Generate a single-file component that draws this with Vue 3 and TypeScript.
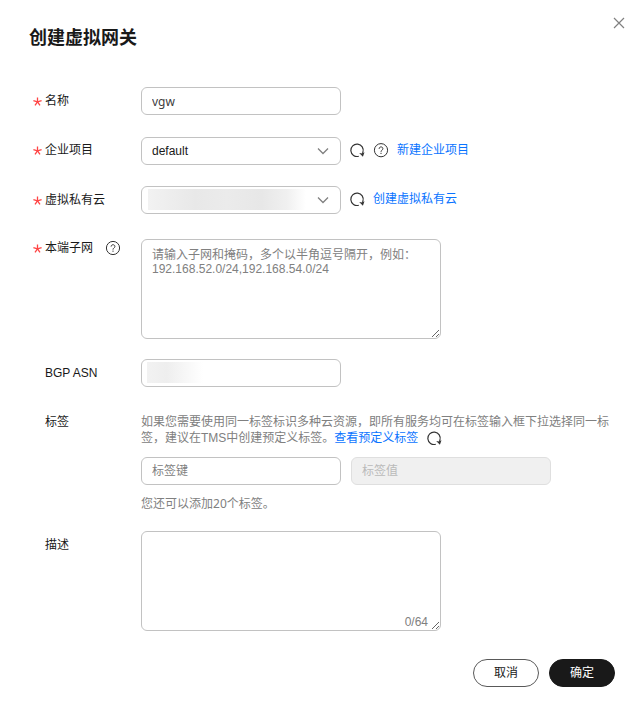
<script setup lang="ts">
import { ref } from 'vue'

const name = ref('vgw')
const project = ref('default')
const vpc = ref('')
const subnets = ref('')
const asn = ref('')
const tagKey = ref('')
const tagValue = ref('')
const description = ref('')
const maxLength = 64
</script>

<template>
  <form class="dialog" @submit.prevent>
    <button class="close" type="button" aria-label="关闭">
      <svg width="12" height="12" viewBox="0 0 12 12"><path d="M1 1l10 10M11 1L1 11" /></svg>
    </button>
    <h1>创建虚拟网关</h1>

    <div class="row name">
      <label class="label required" for="name"><svg class="star" viewBox="0 0 9 9"><path d="M4.5 4.8V.5M4.5 4.8L.4 3.6M4.5 4.8l4.1-1.2M4.5 4.8L2 8.4M4.5 4.8L7 8.4" /></svg>名称</label>
      <input id="name" v-model="name" class="field latin" type="text" />
    </div>

    <div class="row project">
      <label class="label required" for="project"><svg class="star" viewBox="0 0 9 9"><path d="M4.5 4.8V.5M4.5 4.8L.4 3.6M4.5 4.8l4.1-1.2M4.5 4.8L2 8.4M4.5 4.8L7 8.4" /></svg>企业项目</label>
      <div class="line">
        <div class="select">
          <select id="project" v-model="project" class="field"><option>default</option></select>
          <svg class="chevron" viewBox="0 0 12 8"><path d="M1 1.5l5 5 5-5" /></svg>
        </div>
        <button class="icon" type="button" aria-label="刷新">
          <svg viewBox="-1 0 16 16"><path d="M8.8 13.2A6.2 6.2 0 1 1 12.9 9.2l-.4 1.6" /><path class="solid" d="M9.2 9.9l3.7 3.8 1.6-4.5-2.2 1.4z" /></svg>
        </button>
        <button class="icon help" type="button" aria-label="帮助">
          <svg viewBox="0 0 16 16"><circle cx="8" cy="7.2" r="6.6" /><path d="M6.1 5.8C6.1 3.3 9.9 3.3 9.9 5.7 9.9 7.2 8 7.1 8 8.8M8 9.8V11" /></svg>
        </button>
        <a href="#">新建企业项目</a>
      </div>
    </div>

    <div class="row vpc">
      <label class="label required" for="vpc"><svg class="star" viewBox="0 0 9 9"><path d="M4.5 4.8V.5M4.5 4.8L.4 3.6M4.5 4.8l4.1-1.2M4.5 4.8L2 8.4M4.5 4.8L7 8.4" /></svg>虚拟私有云</label>
      <div class="line">
        <div class="select">
          <select id="vpc" v-model="vpc" class="field masked"><option value=""></option></select>
          <svg class="chevron" viewBox="0 0 12 8"><path d="M1 1.5l5 5 5-5" /></svg>
        </div>
        <button class="icon" type="button" aria-label="刷新">
          <svg viewBox="-1 0 16 16"><path d="M8.8 13.2A6.2 6.2 0 1 1 12.9 9.2l-.4 1.6" /><path class="solid" d="M9.2 9.9l3.7 3.8 1.6-4.5-2.2 1.4z" /></svg>
        </button>
        <a href="#">创建虚拟私有云</a>
      </div>
    </div>

    <div class="row subnet">
      <div class="label short required">
        <svg class="star" viewBox="0 0 9 9"><path d="M4.5 4.8V.5M4.5 4.8L.4 3.6M4.5 4.8l4.1-1.2M4.5 4.8L2 8.4M4.5 4.8L7 8.4" /></svg>
        <label for="subnets">本端子网</label>
        <button class="icon help after" type="button" aria-label="帮助">
          <svg viewBox="0 0 16 16"><circle cx="8" cy="8" r="6.6" /><path d="M6.1 6.6C6.1 4.1 9.9 4.1 9.9 6.5 9.9 8 8 7.9 8 9.6M8 10.6v1.2" /></svg>
        </button>
      </div>
      <textarea id="subnets" v-model="subnets" placeholder="请输入子网和掩码，多个以半角逗号隔开，例如：192.168.52.0/24,192.168.54.0/24"></textarea>
    </div>

    <div class="row asn">
      <label class="label" for="asn">BGP ASN</label>
      <input id="asn" v-model="asn" class="field masked-short" type="text" />
    </div>

    <div class="row tags">
      <label class="label short" for="tag-key">标签</label>
      <div>
        <p class="intro">如果您需要使用同一标签标识多种云资源，即所有服务均可在标签输入框下拉选择同一标签，建议在TMS中创建预定义标签。<a href="#">查看预定义标签</a><button class="icon inline" type="button" aria-label="刷新"><svg viewBox="-1 -1 16 16"><path d="M8.8 13.2A6.2 6.2 0 1 1 12.9 9.2l-.4 1.6" /><path class="solid" d="M9.2 9.9l3.7 3.8 1.6-4.5-2.2 1.4z" /></svg></button></p>
        <div class="pair">
          <input id="tag-key" v-model="tagKey" class="field" type="text" placeholder="标签键" />
          <input v-model="tagValue" class="field" type="text" placeholder="标签值" aria-label="标签值" disabled />
        </div>
        <p class="hint">您还可以添加<span class="latin">20</span>个标签。</p>
      </div>
    </div>

    <div class="row">
      <label class="label" for="description">描述</label>
      <div class="counted">
        <textarea id="description" v-model="description" :maxlength="maxLength"></textarea>
        <span class="count">{{ description.length }}/{{ maxLength }}</span>
      </div>
    </div>

    <footer>
      <button class="btn" type="button">取消</button>
      <button class="btn primary" type="submit">确定</button>
    </footer>
  </form>
</template>

<style>
body {
  background: #fff;
}
</style>

<style scoped>
.dialog,
.dialog * {
  box-sizing: border-box;
}
.dialog {
  position: relative;
  padding: 24px 26px 29px 29px;
  font: 12px/16px "Liberation Sans", "Noto Sans CJK SC", sans-serif;
  color: #191919;
}
button,
input,
select,
textarea {
  font: inherit;
  color: inherit;
}
h1 {
  margin: 0 0 35px;
  font-size: 18px;
  line-height: 28px;
  font-weight: 700;
}
p {
  margin: 0;
}
a {
  color: #0a74ff;
  text-decoration: none;
}
svg {
  display: block;
  fill: none;
  stroke: currentColor;
}
.close {
  position: absolute;
  top: 17px;
  right: 16px;
  padding: 0;
  border: 0;
  background: none;
  color: #808080;
}
.close svg {
  stroke-width: 1.2;
}
.row {
  display: grid;
  grid-template-columns: 96px minmax(0, 1fr);
  align-items: start;
  padding-left: 16px;
}
.name {
  margin-bottom: 22px;
}
.project {
  margin-bottom: 21px;
}
.vpc {
  margin-bottom: 25px;
}
.subnet {
  margin-bottom: 20px;
}
.asn {
  margin-bottom: 26px;
}
.tags {
  margin-bottom: 19px;
}
.label {
  display: flex;
  align-items: center;
  line-height: 28px;
}
.project .label,
.line a {
  line-height: 26px;
}
.line a {
  align-self: flex-start;
}
.label.short {
  line-height: 18px;
}
.required {
  margin-left: -12px;
}
.star {
  width: 9px;
  height: 9px;
  margin-right: 3px;
  color: #ff4545;
  stroke-width: 1.3;
}
.line {
  display: flex;
  align-items: center;
}
.field {
  width: 200px;
  max-width: 100%;
  height: 28px;
  padding: 0 10px;
  border: 1px solid #c2c2c2;
  border-radius: 6px;
  background: #fff;
  outline: 0;
}
.field:disabled {
  border-color: #dfdfdf;
  background: #f0f0f0;
}
::placeholder {
  color: #808080;
  opacity: 1;
}
.field:disabled::placeholder {
  color: #bababa;
}
.latin {
  font-family: "Noto Sans", "Noto Sans CJK SC", sans-serif;
}
.name .field {
  color: #404040;
}
.select {
  position: relative;
  margin-right: 8px;
}
.select .field {
  display: block;
  appearance: none;
}
.chevron {
  position: absolute;
  top: 10px;
  right: 12px;
  width: 12px;
  height: 8px;
  color: #808080;
  stroke-width: 1.3;
  pointer-events: none;
}
.select .masked {
  background: linear-gradient(90deg, #f2f2f2, #e8e8e8 30%, #ebebeb 50%, #e7e7e7 72%, #f0f0f0 88%, #fff) 6px 2px / 158px 21px no-repeat #fff;
}
.masked-short {
  background: linear-gradient(90deg, #f2f2f2, #eee 35%, #f6f6f6 65%, #fff) 5px 2px / 56px 21px no-repeat #fff;
}
.icon {
  width: 16px;
  height: 16px;
  margin-right: 8px;
  padding: 0;
  border: 0;
  background: none;
  color: #333;
}
.icon svg {
  width: 16px;
  height: 16px;
  stroke-width: 1.2;
}
.icon .solid {
  fill: currentColor;
  stroke: none;
}
.help svg {
  stroke-width: 1;
}
.after {
  margin-left: 12px;
}
.inline {
  margin: 0 0 0 8px;
  vertical-align: top;
}
textarea {
  display: block;
  width: 300px;
  max-width: 100%;
  height: 100px;
  padding: 8px 10px;
  border: 1px solid #c2c2c2;
  border-radius: 6px;
  background: #fff;
  line-height: 14px;
  outline: 0;
}
.intro,
.hint {
  color: #808080;
}
.intro {
  padding-top: 1px;
}
.pair {
  display: flex;
  gap: 10px;
  margin: 11px 0;
}
.counted {
  position: relative;
  justify-self: start;
}
.count {
  position: absolute;
  right: 13px;
  bottom: 1px;
  color: #808080;
}
footer {
  display: flex;
  justify-content: flex-end;
  gap: 10px;
  margin-top: 28px;
}
.btn {
  width: 66px;
  height: 28px;
  padding: 0;
  border: 1px solid #595959;
  border-radius: 14px;
  background: #fff;
}
.btn.primary {
  border-color: #191919;
  background: #191919;
  color: #fff;
}
</style>
